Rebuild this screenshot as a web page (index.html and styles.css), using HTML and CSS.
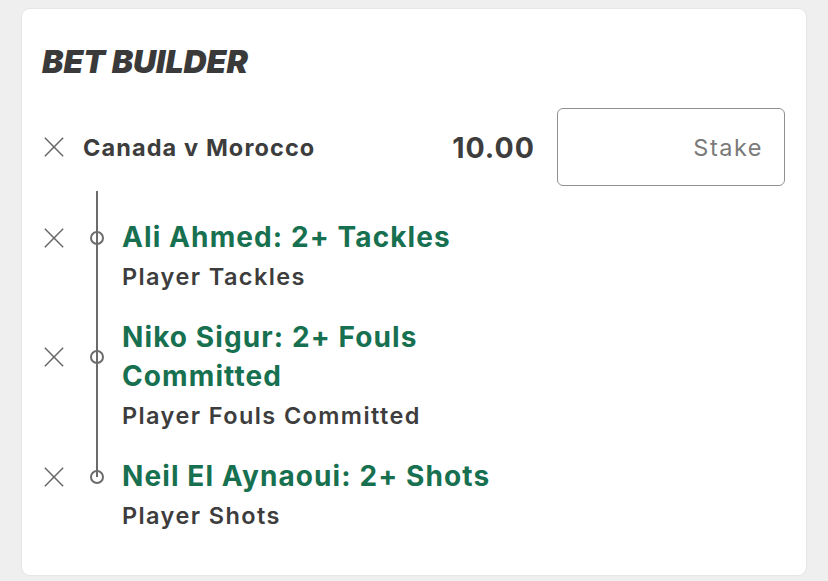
FILE: index.html
```html
<!DOCTYPE html>
<html lang="en">
<head>
    <meta charset="UTF-8">
    <meta name="viewport" content="width=device-width, initial-scale=1.0">
    <title>Bet Builder</title>
    <link rel="stylesheet" href="styles.css">
</head>
<body>
    <div class="card">
        <h2 class="card-title">BET BUILDER</h2>
        <div class="match-row">
            <button class="remove" aria-label="Remove">
                <svg viewBox="0 0 24 24"><path d="M2 2L22 22M22 2L2 22"/></svg>
            </button>
            <span class="match-name">Canada v Morocco</span>
            <span class="odds">10.00</span>
            <input class="stake" type="text" placeholder="Stake">
        </div>
        <div class="legs">
            <div class="leg">
                <button class="remove" aria-label="Remove">
                    <svg viewBox="0 0 24 24"><path d="M2 2L22 22M22 2L2 22"/></svg>
                </button>
                <span class="node"></span>
                <div class="leg-title">Ali Ahmed: 2+ Tackles</div>
                <div class="leg-market">Player Tackles</div>
            </div>
            <div class="leg">
                <button class="remove" aria-label="Remove">
                    <svg viewBox="0 0 24 24"><path d="M2 2L22 22M22 2L2 22"/></svg>
                </button>
                <span class="node"></span>
                <div class="leg-title">Niko Sigur: 2+ Fouls Committed</div>
                <div class="leg-market">Player Fouls Committed</div>
            </div>
            <div class="leg">
                <button class="remove" aria-label="Remove">
                    <svg viewBox="0 0 24 24"><path d="M2 2L22 22M22 2L2 22"/></svg>
                </button>
                <span class="node"></span>
                <div class="leg-title">Neil El Aynaoui: 2+ Shots</div>
                <div class="leg-market">Player Shots</div>
            </div>
        </div>
    </div>
</body>
</html>
```

FILE: styles.css
```css
body{
    margin: 0;
    background: #efefef;
    font-family: Inter, "Noto Sans", sans-serif;
    color: #3d3d3d;
}
.card{
    margin: 9px 22px 5px;
    padding: 34px 21px 40px 20px;
    background: #fff;
    border-radius: 8px;
    box-shadow: 0 0 0 1px #e6e6e6;
}
.card-title{
    margin: 0;
    font-style: italic;
    font-weight: 900;
    font-size: 32px;
    line-height: 38px;
    color: #3a3a3a;
}
.remove{
    width: 24px;
    height: 24px;
    padding: 0;
    border: 0;
    background: none;
    cursor: pointer;
}
.remove svg{
    display: block;
    width: 22px;
    height: 22px;
    margin: 1px;
    fill: none;
    stroke: #666;
    stroke-width: 1.6;
}
.match-row{
    display: flex;
    align-items: center;
    margin-top: 27px;
}
.match-name{
    margin-left: 17px;
    flex: 1;
    font-size: 23.5px;
    font-weight: 700;
    letter-spacing: 1.1px;
}
.odds{
    margin-right: 22px;
    font-size: 28.5px;
    font-weight: 700;
    letter-spacing: 1px;
}
.stake{
    width: 228px;
    height: 78px;
    box-sizing: border-box;
    padding: 0 21px;
    border: 1.5px solid #909090;
    border-radius: 6px;
    font-family: Inter, sans-serif;
    font-size: 23.5px;
    letter-spacing: 1.5px;
    text-align: right;
    color: #3d3d3d;
}
.stake::placeholder{color: #7a7a7a;}
.legs{
    position: relative;
    margin-top: 32px;
    display: flex;
    flex-direction: column;
    gap: 22px;
}
.legs::before{
    content: "";
    position: absolute;
    left: 54px;
    top: -27px;
    bottom: 58px;
    width: 2px;
    background: #6b6b6b;
}
.leg{
    display: grid;
    grid-template-columns: 48px 14px 1fr;
    grid-template-areas:
        "x node title"
        ". . market";
}
.leg .remove{
    grid-area: x;
    align-self: center;
}
.node{
    grid-area: node;
    align-self: center;
    width: 14px;
    height: 14px;
    box-sizing: border-box;
    border: 2px solid #6b6b6b;
    border-radius: 50%;
    background: #fff;
}
.leg-title{
    grid-area: title;
    max-width: 380px;
    padding-left: 18px;
    font-size: 28px;
    line-height: 39px;
    font-weight: 700;
    letter-spacing: 1.1px;
    color: #17704f;
}
.leg-market{
    grid-area: market;
    padding-left: 18px;
    font-size: 23.5px;
    line-height: 39px;
    font-weight: 600;
    letter-spacing: 1.4px;
}
```
